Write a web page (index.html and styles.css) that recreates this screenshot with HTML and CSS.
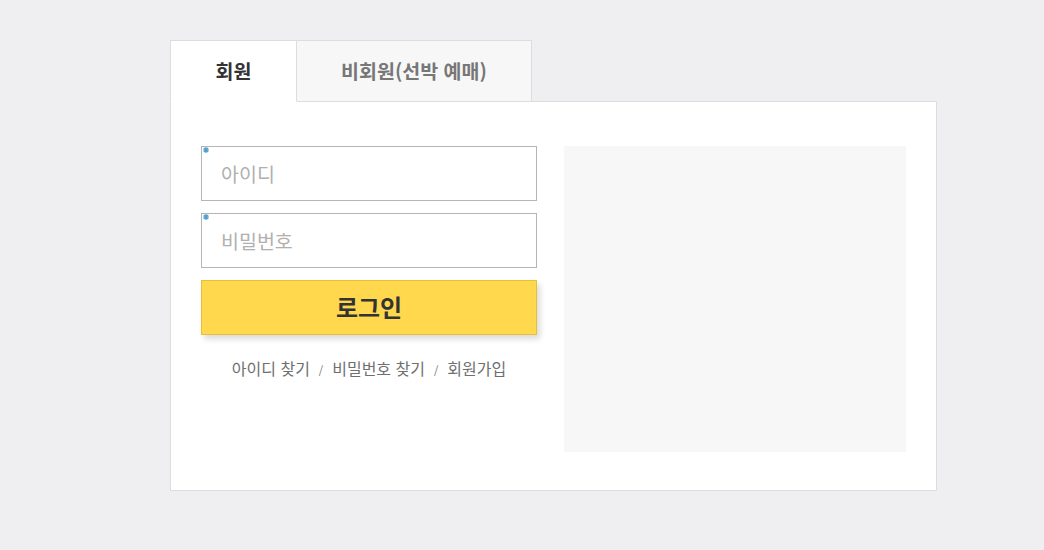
FILE: index.html
```html
<!DOCTYPE html>
<html lang="ko">
<head>
<meta charset="utf-8">
<link rel="stylesheet" href="styles.css">
</head>
<body>
<div class="wrap">
  <div class="tabs">
    <div class="tab active">회원</div>
    <div class="tab">비회원(선박 예매)</div>
  </div>
  <div class="panel">
    <div class="left">
      <div class="field">
        <svg class="req" width="6" height="6" viewBox="0 0 6 6"><path d="M3 0V6M0 3H6M0.8 0.8L5.2 5.2M5.2 0.8L0.8 5.2" stroke="#4a9cc9" stroke-width="1.2"/></svg>
        <input type="text" placeholder="아이디">
      </div>
      <div class="field">
        <svg class="req" width="6" height="6" viewBox="0 0 6 6"><path d="M3 0V6M0 3H6M0.8 0.8L5.2 5.2M5.2 0.8L0.8 5.2" stroke="#4a9cc9" stroke-width="1.2"/></svg>
        <input type="password" placeholder="비밀번호">
      </div>
      <button class="login">로그인</button>
      <div class="links">
        <a>아이디 찾기</a><span class="sep">/</span><a>비밀번호 찾기</a><span class="sep">/</span><a>회원가입</a>
      </div>
    </div>
    <div class="banner"></div>
  </div>
</div>
</body>
</html>
```

FILE: styles.css
```css
* { box-sizing: border-box; }
body {
  margin: 0;
  background: #efeff1;
  font-family: "Noto Sans CJK KR", "Noto Sans", sans-serif;
  height: 550px;
}
.wrap {
  width: 767px;
  margin-left: 170px;
  padding-top: 40px;
}
.tabs {
  display: flex;
  height: 62px;
  margin-bottom: -1px;
  position: relative;
  z-index: 1;
}
.tab {
  height: 62px;
  display: flex;
  align-items: center;
  justify-content: center;
  font-size: 19.5px;
  font-weight: bold;
  color: #777;
  background: #f7f7f7;
  border: 1px solid #dddddd;
  border-left: none;
  width: 235px;
  padding-bottom: 2px;
}
.tab.active {
  width: 127px;
  background: #fff;
  color: #333;
  border-left: 1px solid #dddddd;
  border-bottom-color: #fff;
}
.panel {
  background: #fff;
  border: 1px solid #dddddd;
  height: 390px;
  padding: 44px 30px 38px 30px;
  display: flex;
  gap: 27px;
}
.left { width: 336px; }
.field {
  position: relative;
  height: 55px;
  margin-bottom: 12px;
}
.field input {
  width: 100%;
  height: 55px;
  border: 1px solid #b5b5b5;
  padding: 0 19px;
  font-family: inherit;
  font-size: 19.5px;
  color: #333;
  outline: none;
  background: #fff;
}
.field input::placeholder { color: #b0b0b0; }
.req {
  position: absolute;
  left: 2px;
  top: 1px;
  z-index: 1;
}
.login {
  display: block;
  width: 100%;
  height: 55px;
  background: #ffd84e;
  border: 1px solid #e3c13e;
  box-shadow: 3px 4px 6px rgba(0,0,0,0.15);
  font-family: inherit;
  font-size: 24px;
  font-weight: bold;
  color: #333;
  padding: 0 0 3px;
}
.links {
  margin-top: 21px;
  text-align: center;
  font-size: 16px;
  color: #777;
}
.links a { color: #6f6f6f; }
.sep {
  font-size: 11px;
  margin: 0 9px;
  color: #777;
}
.banner {
  width: 342px;
  height: 306px;
  background: #f7f7f7;
}
```
